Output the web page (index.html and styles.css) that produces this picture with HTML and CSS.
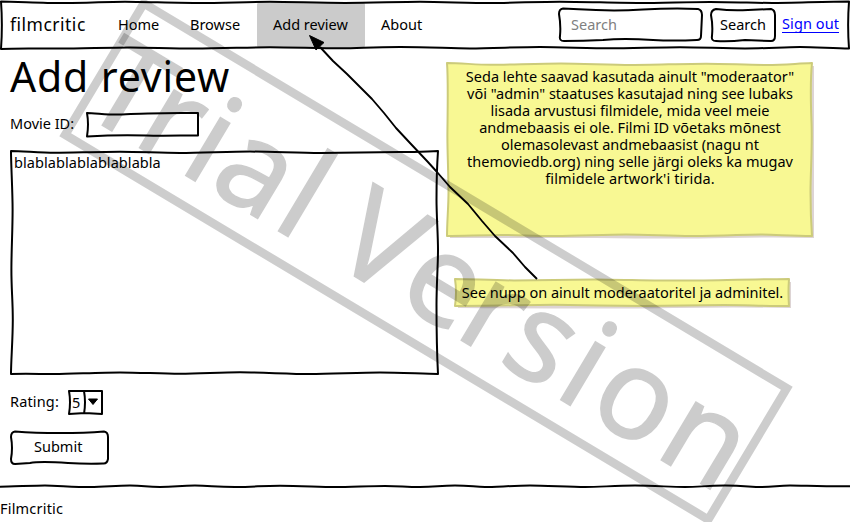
FILE: index.html
```html
<!DOCTYPE html>
<html lang="et">
<head>
<meta charset="utf-8">
<title>Filmcritic</title>
<link rel="stylesheet" href="styles.css">
</head>
<body>
<div class="page">
  <header class="navbar">
    <svg class="sketch" width="850" height="50"><path d="M1 1.5C12 1.5 45 3 60 3S110 1.8 125 1.8S180 3 200 3S250 1.8 270 1.8S320 3 345 3S400 1.8 420 1.8S470 3 490 3S540 1.7 560 1.7S620 3 640 3S690 2 710 2S760 3 775 3S830 1.6 849 1.6C848 15 848 35 849 48.5C835 48.5 815 47 800 47S765 48.5 745 48.5S700 47.2 680 47.2S630 48.3 610 48.3S560 47 540 47S490 48.4 470 48.4S430 47 400 47S360 48.3 340 48.3S290 47.2 270 47.2S220 48.6 195 48.6S150 47.4 130 47.4S80 48.6 60 48.6S15 48 1 49C2 35 2 15 1 1.5Z"/></svg>
    <a class="brand"><span>filmcritic</span></a>
    <nav class="links">
      <a class="link home"><span>Home</span></a>
      <a class="link browse"><span>Browse</span></a>
      <a class="link active"><span>Add review</span></a>
      <a class="link about"><span>About</span></a>
    </nav>
    <div class="search">
      <div class="search-field">
        <svg class="sketch" width="146" height="36"><path d="M5 1.5Q20 2 38 3Q60 4 85 2.5Q115 1 140 2Q144 3 144 8L143 29Q143 33 139 33Q115 34 95 33Q65 31 45 33Q25 34 6 34Q1 34 2 29Q3 18 1 7Q1 2 5 1.5Z"/></svg>
        <span>Search</span>
      </div>
      <div class="search-button">
        <svg class="sketch" width="67" height="36"><path d="M6 2Q22 4 38 3L61 2Q65 3 65 8L65 29Q65 34 61 34L35 33Q18 35 6 34Q1 34 2 29Q3 18 1 8Q1 3 6 2Z"/></svg>
        <span>Search</span>
      </div>
    </div>
    <a class="signout"><span>Sign out</span></a>
  </header>

  <div class="columns">
    <main class="form">
      <h1><span>Add review</span></h1>
      <div class="row movie">
        <span class="label-movie">Movie ID:</span>
        <div class="movie-input"><svg class="sketch" width="114" height="26"><path d="M1 1C8 1 20 2.6 30 2.6S50 1.4 62 1.4S95 1 112 1L112 23.5C95 23.5 75 24 60 23.5S25 23 1 24.5Q3 12 1 1Z"/></svg></div>
      </div>
      <div class="textarea">
        <svg class="sketch" width="430" height="226"><path d="M1 1C12 1 30 2.8 45 2.8S90 1.7 110 1.7S150 3 170 3S220 1.6 240 1.6S290 3 310 3S370 2 390 2S415 1.4 428 1C427 15 426.5 35 426.5 50S428 85 428 100S426.5 135 426.5 155S427 205 428 224C415 224 390 222.5 370 222.5S320 224 300 224S250 222.3 230 222.3S190 223.8 170 223.8S130 222.4 110 222.4S60 224 45 224S15 223.5 1 224C1 210 2.8 190 2.8 170S1.4 140 1.4 120S2.6 80 2.6 60S1 15 1 1Z"/></svg>
        <span class="typed">blablablablablablabla</span>
      </div>
      <div class="row rating">
        <span class="label-rating">Rating:</span>
        <div class="select">
          <svg class="sketch" width="36" height="26"><path d="M1 1L34 1V24L17 23L1 24Q3 12 1 1ZM16 1Q18 12 16 24"/><path class="caret" d="M20.500 9L29.500 9L25 14.500Z"/></svg>
          <span>5</span>
        </div>
      </div>
      <div class="submit">
        <svg class="sketch" width="100" height="36"><path d="M5 1.5Q25 3 50 3Q75 3 94 1.5Q98 2 98 7L98 29Q97 34 93 33.5Q75 34 58 33Q30 31 20 33L5 34Q1 34 1 29Q3 18 1 7Q1 2 5 1.5Z"/></svg>
        <span>Submit</span>
      </div>
    </main>

    <aside class="notes">
      <div class="note big">
        <svg class="sketch paper" width="370" height="178"><path class="shade" d="M4 4L368 4V176Q330 175 280 176T150 176L4 176Z"/><path d="M1 1C15 1 30 2.8 45 2.8S95 1.5 115 1.5S165 3 185 3S240 1.7 260 1.7S300 3 320 3S350 1.5 366 1C364 20 364.5 35 365.5 60S364.5 110 364.5 130S365 160 366 174C345 174 330 172.6 315 172.6S265 174 245 174S200 172.6 180 172.6S130 174 110 174S70 173 55 173S15 174 1 174C1 160 2.5 145 2.5 130S1.4 90 1.4 75S2.5 20 1 1Z"/></svg>
        <p class="l1"><span>Seda lehte saavad kasutada ainult "moderaator"</span></p>
        <p class="l2"><span>või "admin" staatuses kasutajad ning see lubaks</span></p>
        <p class="l3"><span>lisada arvustusi filmidele, mida veel meie</span></p>
        <p class="l4"><span>andmebaasis ei ole. Filmi ID võetaks mõnest</span></p>
        <p class="l5"><span>olemasolevast andmebaasist (nagu nt</span></p>
        <p class="l6"><span>themoviedb.org) ning selle järgi oleks ka mugav</span></p>
        <p class="l7"><span>filmidele artwork'i tirida.</span></p>
      </div>
      <div class="note small">
        <svg class="sketch paper" width="340" height="32"><path class="shade" d="M4 4H337V30Q280 29 220 30T4 30Z"/><path d="M1 1C15 1 40 2.4 60 2.4S120 1.4 140 1.4S200 2.6 225 2.6S290 1.4 335 1Q334 14 335 28C310 28 290 27 270 27S210 28 190 28S120 26.8 100 26.8S30 28 1 28Q3 14 1 1Z"/></svg>
        <p class="s1"><span>See nupp on ainult moderaatoritel ja adminitel.</span></p>
      </div>
    </aside>
  </div>

  <footer class="footer">
    <svg class="rule" width="850" height="6"><path d="M0 2.7C10 2.7 35 1.5 45 1.5S75 3 90 3S115 1.6 130 1.6S145 3 160 3S180 1.6 195 1.6S215 3 235 3S260 1.7 280 1.7S320 3 335 3S370 2 385 2S405 3 420 3S440 1.5 455 1.5S475 3 485 3S515 1.6 530 1.6S570 3 585 3S615 1.6 635 1.6S670 3 685 3S705 1.6 725 1.6S750 3 762 3S778 1.5 790 1.5S825 2.6 850 2.3"/></svg>
    <span>Filmcritic</span>
  </footer>

  <svg class="overlay" width="850" height="522">
    <path class="arrow-line" d="M320 47L333 61L347 74L360 87L372 99L384 113L396 128L410 143L427 161L437 172L450 187L468 204L482 221L495 236L513 253L525 267L537 279"/>
    <path class="arrow-head" d="M309.500 35.500L324 42.500L316 50Z"/>
    <g class="watermark" transform="translate(426 261.5) rotate(30.9)">
      <rect x="-374.7" y="-76.5" width="749.4" height="153"/>
      <text y="49.5" x="-377 -315 -261 -227 -153 -120 -86 -8 60 111 176 213.5 293">Trial Version</text>
    </g>
  </svg>
</div>
</body>
</html>
```
FILE: styles.css
```css
* { box-sizing: border-box; }
body {
  margin: 0;
  background: #fff;
  color: #000;
  font: 14.5px/17px "Noto Sans", "Open Sans", sans-serif;
}
p, h1 { margin: 0; font-weight: normal; }
span { white-space: nowrap; }
.page { position: relative; width: 850px; height: 522px; overflow: hidden; }

.sketch {
  position: absolute;
  left: 0;
  top: 0;
  fill: none;
  stroke: #000;
  stroke-width: 2;
  stroke-linejoin: round;
}
.sketch + span, .sketch ~ p { position: relative; }

.navbar { position: relative; display: flex; align-items: center; height: 50px; }
.brand { width: 103px; padding: 0 0 2px 10px; font-size: 17.5px; letter-spacing: .5px; }
.links { display: flex; height: 46px; }
.link { display: flex; align-items: center; padding: 0 0 2px 15px; }
.home { width: 72px; }
.browse { width: 82px; }
.active { width: 108px; background: #cbcbcb; border-radius: 3px; padding-left: 16px; }
.about { width: 193px; padding-left: 16px; }
.search { display: flex; gap: 6px; }
.search-field { position: relative; width: 146px; height: 36px; padding: 9px 0 0 13px; color: #808080; }
.search-button { position: relative; width: 67px; height: 36px; padding: 9px 0 0 10px; }
.signout { padding: 0 0 2px 5px; color: #00f; }
.signout span { display: block; height: 17px; line-height: 15px; border-bottom: 1px solid #00f; letter-spacing: .1px; }

.columns { display: flex; height: 434px; }
.form { width: 446px; padding-left: 10px; }
h1 { height: 62px; font-size: 41px; line-height: 52px; letter-spacing: .85px; }
.row { display: flex; align-items: center; height: 26px; }
.movie-input { position: relative; width: 114px; height: 26px; margin-left: 12px; }
.label-movie { width: 64px; padding-bottom: 4px; }
.textarea { position: relative; width: 430px; height: 226px; margin-top: 12px; padding: 4px 0 0 4px; letter-spacing: .06px; }
.rating { margin-top: 14px; }
.label-rating { width: 49px; padding-bottom: 4px; letter-spacing: .15px; }
.select { position: relative; width: 36px; height: 26px; margin-left: 9px; padding: 4px 0 0 4px; }
.caret { fill: #000; stroke-width: 1; }
.submit { position: relative; width: 100px; height: 36px; margin-top: 14px; padding: 8px 0 0 24px; }

.notes { padding-top: 12px; }
.note { position: relative; text-align: center; }
.big { width: 368px; height: 178px; padding-top: 6px; }
.l7 { letter-spacing: .12px; }
.small { width: 335px; height: 32px; margin: 38px 0 0 8px; padding: 6px 0 0 2px; }
.paper { fill: #f8f893; stroke: #cccb7a; }
.paper .shade { fill: #ddd4d4; stroke: none; }

.footer { position: relative; letter-spacing: .2px; }
.rule { display: block; fill: none; stroke: #000; stroke-width: 2; margin-bottom: 10px; }

.overlay { position: absolute; left: 0; top: 0; pointer-events: none; }
.arrow-line { fill: none; stroke: #000; stroke-width: 1.9; stroke-linejoin: round; }
.arrow-head { fill: #000; stroke: #000; }
.watermark rect { fill: none; stroke: #000; stroke-width: 8.6; opacity: .196; }
.watermark text { font-size: 126px; fill: #000; stroke: #000; stroke-width: 1.4; opacity: .196; }
```
